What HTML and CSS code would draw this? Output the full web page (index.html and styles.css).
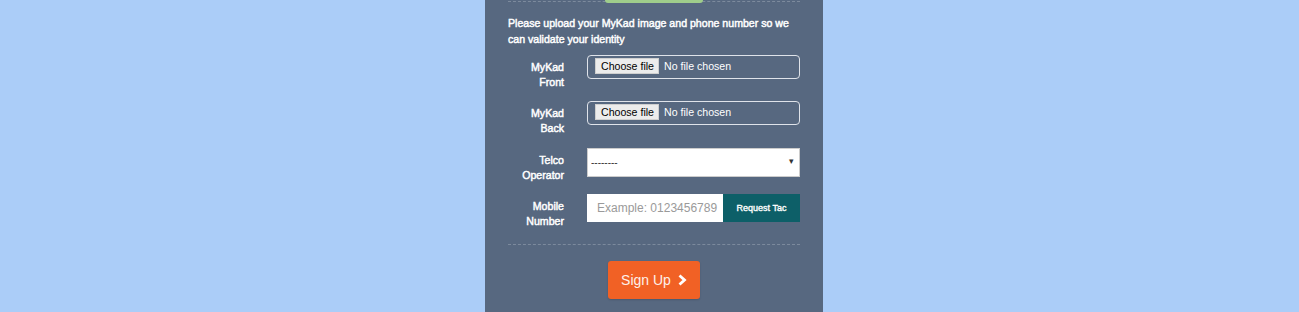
FILE: index.html
```html
<!DOCTYPE html>
<html>
<head>
<meta charset="utf-8">
<link rel="stylesheet" href="styles.css">
</head>
<body>
<div class="page">
  <div class="panel">
    <div class="top">
      <div class="rule top-rule"></div>
      <div class="tab"></div>
    </div>
    <p class="intro">Please upload your MyKad image and phone number so we can validate your identity</p>
    <form class="form">
      <div class="row">
        <span class="label">MyKad<br>Front</span>
        <label class="filebox"><input type="file" class="file-hidden"><span class="filebtn">Choose file</span><span class="filename">No file chosen</span></label>
      </div>
      <div class="row">
        <span class="label">MyKad<br>Back</span>
        <label class="filebox"><input type="file" class="file-hidden"><span class="filebtn">Choose file</span><span class="filename">No file chosen</span></label>
      </div>
      <div class="row row-select">
        <span class="label">Telco<br>Operator</span>
        <div class="selectwrap">
          <select class="select"><option>--------</option></select>
        </div>
      </div>
      <div class="row">
        <span class="label">Mobile<br>Number</span>
        <div class="inputgroup">
          <input type="text" class="mobile" placeholder="Example: 0123456789">
          <button type="button" class="tac">Request Tac</button>
        </div>
      </div>
      <div class="rule bottom-rule"></div>
      <div class="actions">
        <button type="button" class="signup">Sign Up
          <svg class="chev" width="9" height="12" viewBox="0 0 9 12"><path d="M1.5 1.5 L6.5 6 L1.5 10.5" fill="none" stroke="#fff" stroke-width="2.8" stroke-linejoin="miter"/></svg>
        </button>
      </div>
    </form>
  </div>
</div>
</body>
</html>
```
FILE: styles.css
```css
html, body {
  margin: 0;
  padding: 0;
}
body {
  background: #abcdf8;
  font-family: "Liberation Sans", Arial, sans-serif;
}
.page {
  display: flex;
  justify-content: center;
  height: 312px;
  overflow: hidden;
  padding-left: 9px;
}
.panel {
  width: 338px;
  box-sizing: border-box;
  background: #576880;
  padding: 0 23px;
  height: 400px;
}
.top {
  position: relative;
  height: 15px;
}
.rule {
  border-top: 1px dashed #7c8a9d;
}
.top-rule {
  position: relative;
  top: 1px;
}
.tab {
  position: absolute;
  top: 0;
  left: 97px;
  width: 98px;
  height: 3px;
  background: #9fcd8b;
  border-radius: 0 0 4px 4px;
}
.intro {
  margin: 0 0 8px;
  color: #fff;
  font-size: 10.6px;
  -webkit-text-stroke: 0.45px #fff;
  line-height: 16px;
}
.form {
  margin: 0;
  display: flex;
  flex-direction: column;
}
.row {
  display: grid;
  grid-template-columns: 56px 213px;
  column-gap: 23px;
  margin-bottom: 11px;
  height: 35px;
  align-items: start;
}
.row-select {
  margin-top: 1px;
}
.label {
  text-align: right;
  color: #fff;
  font-size: 10.6px;
  -webkit-text-stroke: 0.45px #fff;
  line-height: 15px;
  padding-top: 5px;
}
.filebox {
  display: flex;
  align-items: center;
  border: 1px solid #dfe3ea;
  border-radius: 4px;
  height: 24px;
  box-sizing: border-box;
  padding: 0 0 2px 7px;
  cursor: pointer;
}
.file-hidden {
  display: none;
}
.filebtn {
  display: block;
  height: 16px;
  line-height: 15px;
  box-sizing: border-box;
  padding: 0 4px 0 5px;
  background: #ececec;
  color: #000;
  border: 1px solid #cfcfcf;
  font-size: 10.6px;
}
.filename {
  color: #fff;
  font-size: 10.6px;
  margin-left: 5px;
  line-height: 15px;
}
.selectwrap {
  position: relative;
  height: 29px;
}
.select {
  appearance: none;
  -webkit-appearance: none;
  width: 100%;
  height: 29px;
  border: 1px solid #ccc;
  border-radius: 0;
  background: #fff;
  color: #333;
  font-family: "Liberation Sans", Arial, sans-serif;
  font-size: 10px;
  padding: 0 3px;
  margin: 0;
}
.selectwrap::after {
  content: "\25BE";
  position: absolute;
  right: 6px;
  top: 8px;
  font-size: 9px;
  color: #333;
  pointer-events: none;
}
.inputgroup {
  display: flex;
  height: 28px;
}
.mobile {
  width: 136px;
  box-sizing: border-box;
  border: none;
  margin: 0;
  padding: 0 2px 0 10px;
  height: 28px;
  font-family: "Liberation Sans", Arial, sans-serif;
  font-size: 12px;
  background: #fff;
}
.mobile::placeholder {
  color: #9a9a9a;
}
.tac {
  flex: 1;
  height: 28px;
  border: none;
  margin: 0;
  background: #0d5f68;
  color: #fff;
  font-family: "Liberation Sans", Arial, sans-serif;
  font-size: 9px;
  -webkit-text-stroke: 0.35px #fff;
  padding: 0;
}
.bottom-rule {
  margin-top: 4px;
}
.actions {
  display: flex;
  justify-content: center;
  padding-top: 16px;
}
.signup {
  width: 92px;
  height: 38px;
  border: none;
  border-radius: 3px;
  background: #f16125;
  color: #fdf0ea;
  font-family: "Liberation Sans", Arial, sans-serif;
  font-size: 14px;
  display: flex;
  align-items: center;
  justify-content: center;
  gap: 7px;
  padding: 0 0 1px;
  box-shadow: 0 1px 2px rgba(0,0,0,0.15);
}
.chev {
  display: block;
}
```
